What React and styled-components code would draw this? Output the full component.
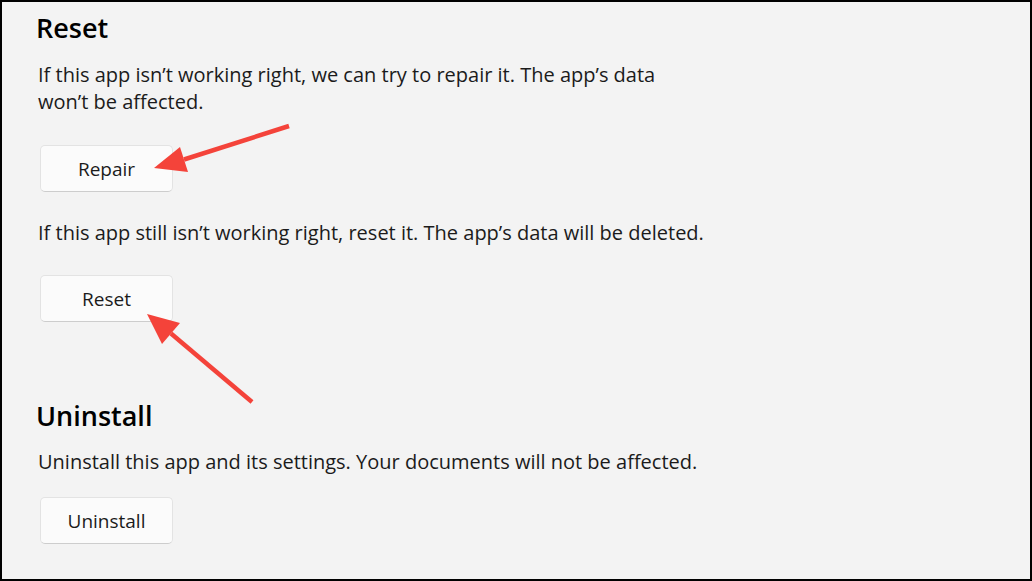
import React from "react";
import styled, { createGlobalStyle } from "styled-components";

const Global = createGlobalStyle`
  * { box-sizing: border-box; }
  html, body { margin: 0; padding: 0; background: #000; }
  body { font-family: "Open Sans", "Noto Sans", sans-serif; }
`;

const Frame = styled.div`
  position: relative;
  width: 1032px;
  height: 581px;
  border: 2px solid #000;
  background: #f3f3f3;
  padding: 8px 0 0 36px;
  color: #1b1b1b;
  overflow: hidden;
  display: flex;
  flex-direction: column;
`;

const Section = styled.section`
  display: flex;
  flex-direction: column;
  align-items: flex-start;
  margin-top: ${(p) => p.$gap || 0}px;
`;

const Heading = styled.h2`
  margin: 0 0 0 -2px;
  font-size: 27px;
  font-weight: 600;
  line-height: 36px;
  color: #000;
`;

const Desc = styled.p`
  margin: ${(p) => p.$gap || 0}px 0 0 0;
  font-size: 20px;
  line-height: 27px;
  color: #1b1b1b;
`;

const Button = styled.button`
  margin: ${(p) => p.$gap || 0}px 0 0 2px;
  width: 133px;
  height: 47px;
  padding: 0;
  border-radius: 5px;
  border: 1px solid #e3e3e3;
  border-bottom-color: #cdcdcd;
  background: #fbfbfb;
  font-family: inherit;
  font-size: 19px;
  color: #1b1b1b;
  cursor: pointer;
`;

const Overlay = styled.svg`
  position: absolute;
  left: -2px;
  top: -2px;
  width: 1032px;
  height: 581px;
  pointer-events: none;
`;

const RED = "#f4433a";

function Arrow({ tail, tip, c1, c2 }) {
  const mid = [(c1[0] + c2[0]) / 2, (c1[1] + c2[1]) / 2];
  return (
    <g>
      <line x1={tail[0]} y1={tail[1]} x2={mid[0]} y2={mid[1]} stroke={RED} strokeWidth="4.5" />
      <polygon points={`${tip[0]},${tip[1]} ${c1[0]},${c1[1]} ${c2[0]},${c2[1]}`} fill={RED} />
    </g>
  );
}

export default function App() {
  return (
    <>
      <Global />
      <Frame>
        <Section>
          <Heading>Reset</Heading>
          <Desc $gap={15}>
            If this app isn’t working right, we can try to repair it. The app’s data
            <br />
            won’t be affected.
          </Desc>
          <Button $gap={30}>Repair</Button>
          <Desc $gap={27}>If this app still isn’t working right, reset it. The app’s data will be deleted.</Desc>
          <Button $gap={29}>Reset</Button>
        </Section>
        <Section $gap={76}>
          <Heading>Uninstall</Heading>
          <Desc $gap={14}>Uninstall this app and its settings. Your documents will not be affected.</Desc>
          <Button $gap={22}>Uninstall</Button>
        </Section>
        <Overlay viewBox="0 0 1032 581">
          <Arrow tail={[289, 126]} tip={[154, 168]} c1={[180, 147]} c2={[188, 172]} />
          <Arrow tail={[252, 402]} tip={[147, 314]} c1={[180, 323]} c2={[162, 344]} />
        </Overlay>
      </Frame>
    </>
  );
}
